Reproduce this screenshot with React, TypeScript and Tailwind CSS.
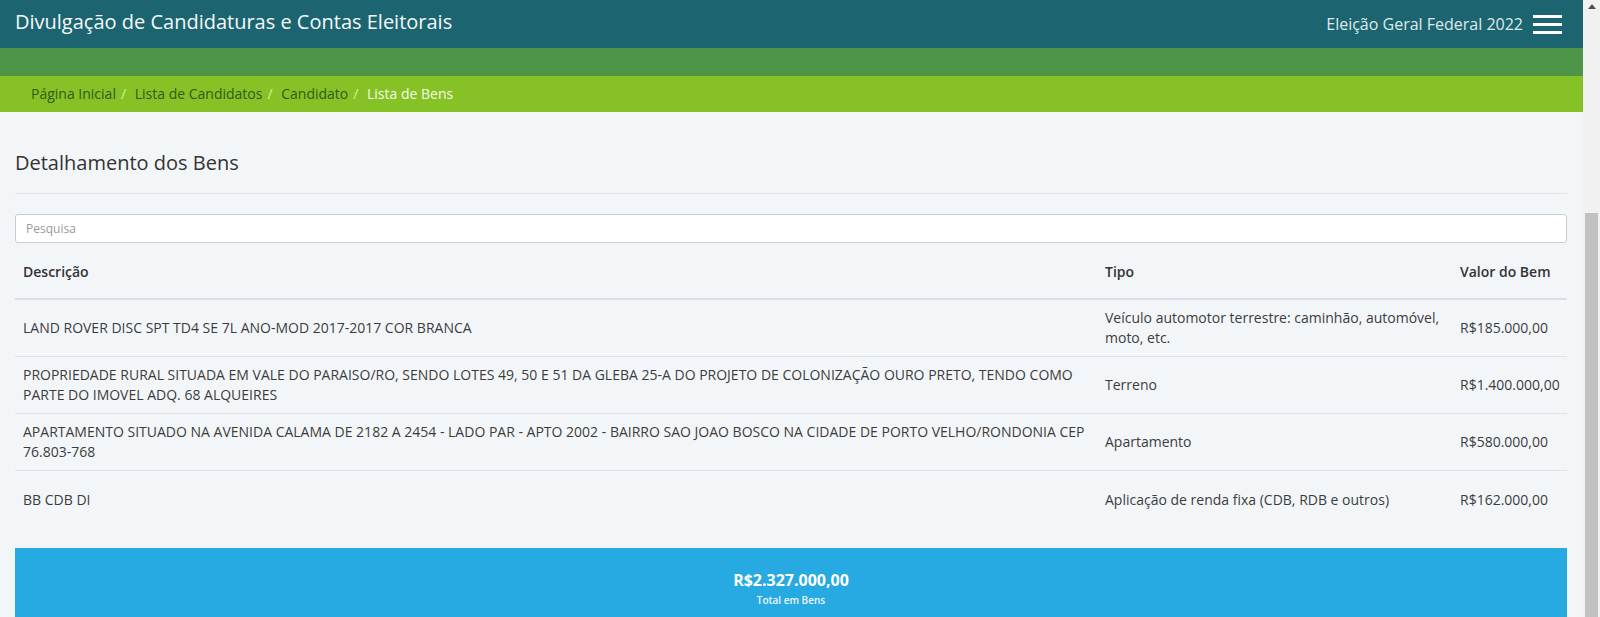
import React from 'react';

interface Bem {
  descricao: string;
  tipo: string;
  valor: string;
}

const bens: Bem[] = [
  {
    descricao: 'LAND ROVER DISC SPT TD4 SE 7L ANO-MOD 2017-2017 COR BRANCA',
    tipo: 'Veículo automotor terrestre: caminhão, automóvel, moto, etc.',
    valor: 'R$185.000,00',
  },
  {
    descricao:
      'PROPRIEDADE RURAL SITUADA EM VALE DO PARAISO/RO, SENDO LOTES 49, 50 E 51 DA GLEBA 25-A DO PROJETO DE COLONIZAÇÃO OURO PRETO, TENDO COMO PARTE DO IMOVEL ADQ. 68 ALQUEIRES',
    tipo: 'Terreno',
    valor: 'R$1.400.000,00',
  },
  {
    descricao:
      'APARTAMENTO SITUADO NA AVENIDA CALAMA DE 2182 A 2454 - LADO PAR - APTO 2002 - BAIRRO SAO JOAO BOSCO NA CIDADE DE PORTO VELHO/RONDONIA CEP 76.803-768',
    tipo: 'Apartamento',
    valor: 'R$580.000,00',
  },
  {
    descricao: 'BB CDB DI',
    tipo: 'Aplicação de renda fixa (CDB, RDB e outros)',
    valor: 'R$162.000,00',
  },
];

const crumbs = ['Página Inicial', 'Lista de Candidatos', 'Candidato'];

const App: React.FC = () => {
  return (
    <div className="flex h-[617px] w-[1600px] overflow-hidden font-['Open_Sans',sans-serif] text-[#333]">
      <div className="flex min-w-0 flex-1 flex-col bg-[#f3f6f9]">
        {/* top bar */}
        <header className="flex h-12 shrink-0 items-center justify-between bg-[#1c6570] pl-[15px] pr-[21px]">
          <h1 className="mb-[5px] text-[20px] leading-7 text-[#f4f8f8]">
            Divulgação de Candidaturas e Contas Eleitorais
          </h1>
          <div className="flex items-center gap-[10px]">
            <span className="text-base text-[#dfe9ea]">Eleição Geral Federal 2022</span>
            <button className="flex w-[29px] flex-col gap-[5px]">
              <span className="h-[3px] w-full bg-white" />
              <span className="h-[3px] w-full bg-white" />
              <span className="h-[3px] w-full bg-white" />
            </button>
          </div>
        </header>
        <div className="h-[28px] shrink-0 bg-[#4f9549]" />
        <nav className="flex h-9 shrink-0 items-center bg-[#86c226] pl-[31px] text-sm">
          {crumbs.map((c) => (
            <React.Fragment key={c}>
              <span className="text-[#33591b]">{c}</span>
              <span className="px-[5px] text-[#dcef95]">/{'\u00a0'}</span>
            </React.Fragment>
          ))}
          <span className="text-[#f5fbe4]">Lista de Bens</span>
        </nav>

        <main className="pl-[15px] pr-[16px]">
          <h2 className="pt-[37px] text-[20px] leading-7 text-[#333]">Detalhamento dos Bens</h2>
          <hr className="mt-4 border-0 border-t border-[#e1e5e9]" />
          <input
            type="text"
            placeholder="Pesquisa"
            className="mt-5 h-[29px] w-full rounded-[3px] border border-[#c9cdd1] bg-white pl-[10px] text-xs outline-none placeholder:text-[#9a9a9a]"
          />

          <div className="text-sm">
            <div className="grid h-[57px] grid-cols-[1082px_355px_1fr] items-center border-b-2 border-[#dcdfe3] pt-[3px] font-semibold text-[#333]">
              <div className="px-2">Descrição</div>
              <div className="px-2">Tipo</div>
              <div className="px-2">Valor do Bem</div>
            </div>
            {bens.map((b, i) => (
              <div
                key={i}
                className={`grid h-[57px] grid-cols-[1082px_355px_1fr] items-center leading-5 text-[#3c3c3c] ${
                  i < bens.length - 1 ? 'border-b border-[#dfe2e6]' : ''
                }`}
              >
                <div className="px-2">{b.descricao}</div>
                <div className="px-2">{b.tipo}</div>
                <div className="px-2">{b.valor}</div>
              </div>
            ))}
          </div>

          {/* total box */}
          <div className="mt-5 flex flex-col items-center bg-[#27aae1] pb-5 pt-[21px] text-white">
            <div className="text-base font-bold leading-[22px]">R$2.327.000,00</div>
            <div className="mt-[2px] text-[10px] font-semibold leading-[14px] text-[#eef8fd]">Total em Bens</div>
          </div>
        </main>
      </div>

      {/* window scrollbar */}
      <div className="flex w-[17px] shrink-0 flex-col bg-[#f1f1f1]">
        <div className="flex h-[17px] items-start justify-center pt-[4px]">
          <svg width="8" height="5" viewBox="0 0 8 5">
            <path d="M0 5 L4 0 L8 5 Z" fill="#505050" />
          </svg>
        </div>
        <div className="mx-[2px] mt-[196px] flex-1 bg-[#c1c1c1]" />
      </div>
    </div>
  );
};

export default App;
